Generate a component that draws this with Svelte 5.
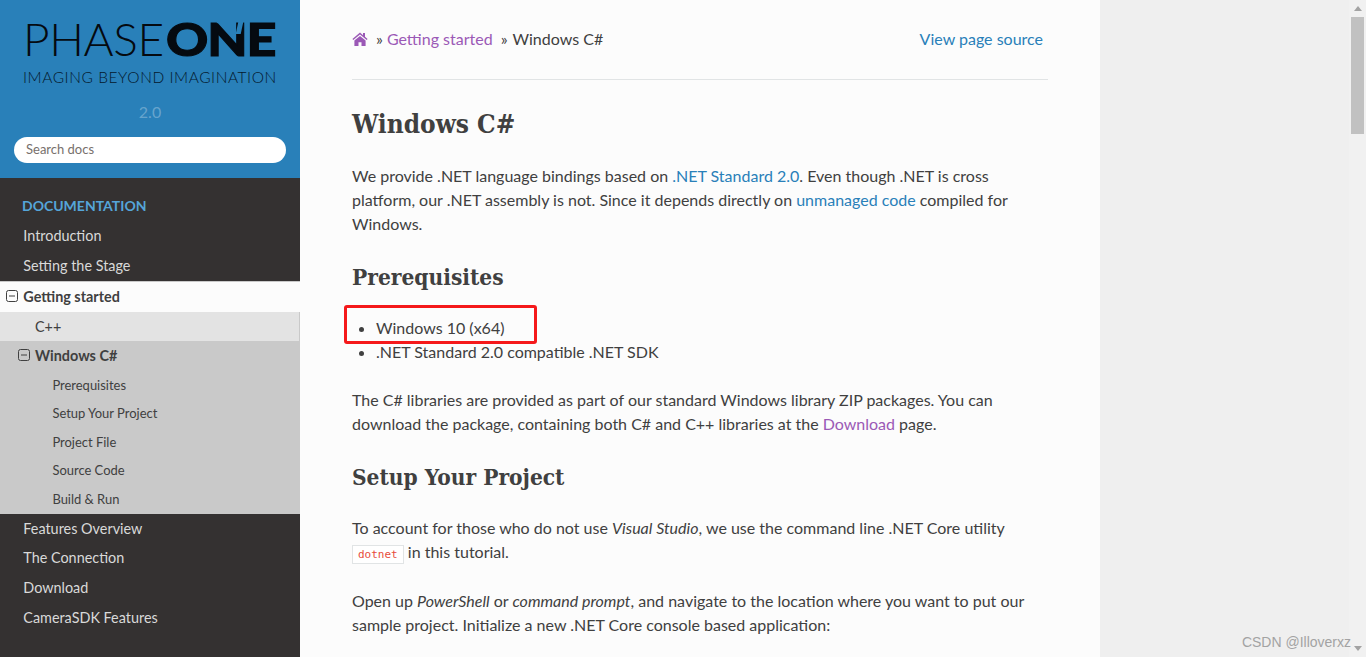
<script>
  const topItems = ['Introduction', 'Setting the Stage'];
  const subItems = ['Prerequisites', 'Setup Your Project', 'Project File', 'Source Code', 'Build & Run'];
  const bottomItems = ['Features Overview', 'The Connection', 'Download', 'CameraSDK Features'];
</script>

<div class="page">
  <nav class="side">
    <div class="search-area">
      <div class="logo">
        <div class="wordmark"><span class="thin">PHASE</span><span class="heavy">ONE</span><i class="notch"></i></div>
        <div class="tagline">IMAGING BEYOND IMAGINATION</div>
      </div>
      <div class="version">2.0</div>
      <div class="search">Search docs</div>
    </div>
    <div class="menu">
      <p class="caption">DOCUMENTATION</p>
      {#each topItems as item}
        <a class="l1">{item}</a>
      {/each}
      <a class="l1 current">
        <svg class="toggle t1" viewBox="0 0 12 12"><rect x="0.5" y="0.5" width="11" height="11" rx="2" /><path d="M3 6h6" /></svg>
        Getting started
      </a>
      <a class="l2 cpp">C++</a>
      <div class="group">
        <a class="l2 active">
          <svg class="toggle t2" viewBox="0 0 12 12"><rect x="0.5" y="0.5" width="11" height="11" rx="2" /><path d="M3 6h6" /></svg>
          Windows C#
        </a>
        {#each subItems as item}
          <a class="l3">{item}</a>
        {/each}
      </div>
      {#each bottomItems as item}
        <a class="l1">{item}</a>
      {/each}
    </div>
  </nav>

  <main class="content">
    <div class="crumbs">
      <svg class="home" viewBox="0 0 16 14"><path d="M8 0.6 0.4 7l0.9 1.1L8 2.5l6.7 5.6.9-1.1-2.6-2.2V1h-2v2.3zM2.4 8.6V14h4.1v-3.8h3V14h4.1V8.6L8 3.9z" /></svg>
      <span class="sep first">»</span>
      <a class="visited">Getting started</a>
      <span class="sep second">»</span>
      <span>Windows C#</span>
      <a class="source">View page source</a>
    </div>
    <hr />

    <h1>Windows C#</h1>
    <p>We provide .NET language bindings based on <a>.NET Standard 2.0</a>. Even though .NET is cross platform, our .NET assembly is not. Since it depends directly on <a>unmanaged code</a> compiled for Windows.</p>

    <h2>Prerequisites</h2>
    <ul>
      <li>Windows 10 (x64)</li>
      <li>.NET Standard 2.0 compatible .NET SDK</li>
      <span class="highlight"></span>
    </ul>
    <p>The C# libraries are provided as part of our standard Windows library ZIP packages. You can download the package, containing both C# and C++ libraries at the <a class="visited">Download</a> page.</p>

    <h2>Setup Your Project</h2>
    <p class="with-code">To account for those who do not use <em>Visual Studio</em>, we use the command line .NET Core utility <code>dotnet</code> in this tutorial.</p>
    <p>Open up <em>PowerShell</em> or <em>command prompt</em>, and navigate to the location where you want to put our sample project. Initialize a new .NET Core console based application:</p>
  </main>

  <div class="rest"></div>

  <div class="scrollbar">
    <svg viewBox="0 0 8 5"><path d="M4 0 8 5H0z" /></svg>
    <div class="thumb"></div>
    <div class="fill"></div>
    <svg viewBox="0 0 8 5"><path d="M0 0h8L4 5z" /></svg>
  </div>

  <div class="watermark">CSDN @Illoverxz</div>
</div>

<style>
  :global(body) {
    margin: 0;
    overflow: hidden;
  }

  .page {
    position: relative;
    display: flex;
    height: 657px;
    overflow: hidden;
    background: #efefef;
    font-family: Lato, "Liberation Sans", sans-serif;
    font-size: 16px;
    line-height: 24px;
    color: #404040;
  }

  .side {
    flex: 0 0 300px;
    background: #343131;
    overflow: hidden;
  }

  .search-area {
    box-sizing: border-box;
    height: 178px;
    padding-top: 19px;
    background: #2980b9;
  }

  .logo {
    margin-left: 23px;
    height: 65px;
    color: #050a10;
    white-space: nowrap;
  }

  .wordmark {
    position: relative;
    height: 40px;
    font-size: 46px;
    line-height: 40px;
    letter-spacing: -0.4px;
  }

  .thin {
    font-weight: 300;
  }

  .heavy {
    display: inline-block;
    margin-left: 2px;
    font-weight: 900;
    font-size: 45px;
    letter-spacing: -1px;
    -webkit-text-stroke: 1px #050a10;
    transform: scaleX(1.16);
    transform-origin: left center;
  }

  .notch {
    position: absolute;
    left: 214px;
    top: 3px;
    width: 5px;
    height: 12px;
    background: #2980b9;
    transform: skewX(-12deg);
  }

  .tagline {
    margin-top: 8px;
    font-size: 15.5px;
    line-height: 20px;
    font-weight: 300;
    color: #04182c;
    letter-spacing: 0.55px;
  }

  .version {
    margin-top: 16px;
    height: 24px;
    text-align: center;
    color: rgba(255, 255, 255, 0.3);
  }

  .search {
    box-sizing: border-box;
    height: 26px;
    margin: 13px 14px 0;
    padding-left: 12px;
    border-radius: 13px;
    background: #fff;
    font-size: 13px;
    line-height: 25px;
    color: #77706c;
  }

  .menu {
    font-size: 14.4px;
    line-height: 18px;
    color: #d9d9d9;
  }

  .caption {
    margin: 0;
    padding: 19px 0 6.5px 22px;
    height: 18px;
    font-size: 14px;
    font-weight: 700;
    color: #55a5d9;
  }

  .menu a {
    display: block;
    position: relative;
    padding: 5.8px 0 5.8px 23.3px;
  }

  .l1 {
    color: #d9d9d9;
  }

  .menu .current {
    margin-top: 0.6px;
    font-weight: 700;
    color: #404040;
    background: #fcfcfc;
    border-top: 1px solid #c9c9c9;
    border-bottom: 1px solid #c9c9c9;
  }

  .menu .l2 {
    padding-left: 35px;
    color: #404040;
  }

  .menu .cpp {
    margin-top: -1px;
    background: #e3e3e3;
    border-right: 1px solid #c9c9c9;
    font-weight: 400;
  }

  .group {
    padding-bottom: 1px;
    background: #c9c9c9;
  }

  .menu .active {
    padding-top: 6px;
    padding-bottom: 5px;
    font-weight: 700;
  }

  .menu .l3 {
    padding-left: 52.4px;
    font-size: 12.96px;
    padding-top: 5.25px;
    padding-bottom: 5.25px;
    color: #404040;
  }

  .toggle {
    position: absolute;
    top: 8px;
    width: 12px;
    height: 12px;
    fill: none;
    stroke: #404040;
    stroke-width: 1;
  }

  .t1 {
    left: 6px;
  }

  .t2 {
    left: 18px;
  }

  .content {
    box-sizing: border-box;
    flex: 0 0 800px;
    padding: 27px 52px 0;
    background: #fcfcfc;
  }

  .crumbs {
    display: flex;
    align-items: center;
    height: 24px;
    white-space: pre;
  }

  .home {
    width: 16px;
    height: 14px;
    fill: #9b59b6;
  }

  .sep {
    color: #404040;
  }

  .first {
    margin: 0 4px 0 8px;
  }

  .second {
    margin: 0 5px 0 8px;
  }

  a {
    color: #2980b9;
  }

  .visited {
    color: #9b59b6;
  }

  .source {
    margin-left: auto;
    margin-right: 5px;
  }

  hr {
    height: 1px;
    margin: 28px 0 0;
    border: 0;
    background: #e1e4e5;
  }

  h1,
  h2 {
    margin: 0;
    font-family: "DejaVu Serif Condensed", "DejaVu Serif", "Liberation Serif", serif;
    font-stretch: condensed;
    font-weight: 700;
    color: #404040;
  }

  h1 {
    margin-top: 26px;
    margin-bottom: 22px;
    font-size: 26px;
    line-height: 36px;
  }

  h2 {
    font-size: 22.5px;
    line-height: 34px;
    margin-bottom: 22px;
  }

  p {
    margin: 0 0 24px;
  }

  .with-code {
    margin-bottom: 25px;
  }

  ul {
    position: relative;
    margin: 0 0 24px;
    padding: 0 0 0 24px;
  }

  li {
    padding: 0;
  }

  .highlight {
    position: absolute;
    left: -8px;
    top: -11px;
    width: 187px;
    height: 33px;
    border: 3px solid #f5191b;
    border-radius: 3px;
  }

  em {
    font-style: italic;
  }

  code {
    padding: 2px 5px;
    border: 1px solid #e1e4e5;
    background: #fff;
    font-family: "DejaVu Sans Mono", "Liberation Mono", monospace;
    font-size: 11px;
    line-height: 1;
    color: #e74c3c;
  }

  .rest {
    flex: 1;
  }

  .scrollbar {
    display: flex;
    flex-direction: column;
    align-items: center;
    flex: 0 0 17px;
    background: #f1f1f1;
  }

  .scrollbar svg {
    flex: 0 0 5px;
    width: 8px;
    margin: 6px 0;
    fill: #a3a3a3;
  }

  .thumb {
    flex: 0 0 117px;
    width: 13px;
    background: #c1c1c1;
  }

  .fill {
    flex: 1;
  }

  .watermark {
    position: absolute;
    right: 15px;
    top: 632px;
    font-family: "Liberation Sans", sans-serif;
    font-size: 14px;
    line-height: 20px;
    color: #a3a3a3;
  }
</style>
